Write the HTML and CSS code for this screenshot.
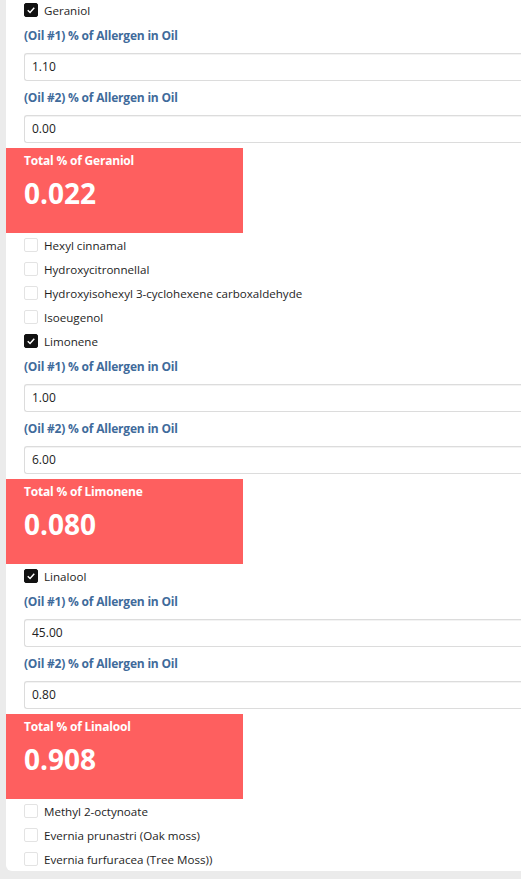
FILE: index.html
```html
<!DOCTYPE html>
<html>
<head>
<meta charset="utf-8">
<link rel="stylesheet" href="styles.css">
</head>
<body>
<div class="page">
  <div class="card">
    <label class="check-row"><span class="box checked"><svg viewBox="0 0 14 14"><path d="M3.2 7.2 L5.9 9.8 L10.8 4.4" /></svg></span><span>Geraniol</span></label>
    <div class="field-label">(Oil #1) % of Allergen in Oil</div>
    <div class="input">1.10</div>
    <div class="field-label">(Oil #2) % of Allergen in Oil</div>
    <div class="input">0.00</div>
    <div class="total">
      <div class="total-title">Total % of Geraniol</div>
      <div class="total-value">0.022</div>
    </div>
    <label class="check-row"><span class="box"></span><span>Hexyl cinnamal</span></label>
    <label class="check-row"><span class="box"></span><span>Hydroxycitronnellal</span></label>
    <label class="check-row"><span class="box"></span><span>Hydroxyisohexyl 3-cyclohexene carboxaldehyde</span></label>
    <label class="check-row"><span class="box"></span><span>Isoeugenol</span></label>
    <label class="check-row"><span class="box checked"><svg viewBox="0 0 14 14"><path d="M3.2 7.2 L5.9 9.8 L10.8 4.4" /></svg></span><span>Limonene</span></label>
    <div class="field-label">(Oil #1) % of Allergen in Oil</div>
    <div class="input">1.00</div>
    <div class="field-label">(Oil #2) % of Allergen in Oil</div>
    <div class="input">6.00</div>
    <div class="total">
      <div class="total-title">Total % of Limonene</div>
      <div class="total-value">0.080</div>
    </div>
    <label class="check-row"><span class="box checked"><svg viewBox="0 0 14 14"><path d="M3.2 7.2 L5.9 9.8 L10.8 4.4" /></svg></span><span>Linalool</span></label>
    <div class="field-label">(Oil #1) % of Allergen in Oil</div>
    <div class="input">45.00</div>
    <div class="field-label">(Oil #2) % of Allergen in Oil</div>
    <div class="input">0.80</div>
    <div class="total">
      <div class="total-title">Total % of Linalool</div>
      <div class="total-value">0.908</div>
    </div>
    <label class="check-row"><span class="box"></span><span>Methyl 2-octynoate</span></label>
    <label class="check-row"><span class="box"></span><span>Evernia prunastri (Oak moss)</span></label>
    <label class="check-row"><span class="box"></span><span>Evernia furfuracea (Tree Moss))</span></label>
  </div>
</div>
</body>
</html>
```

FILE: styles.css
```css
html, body {
  margin: 0;
  padding: 0;
  background: #ebebeb;
  font-family: "Open Sans", "Noto Sans", sans-serif;
  color: #222;
  overflow: hidden;
}
.page {
  padding-left: 6px;
  height: 879px;
}
.card {
  background: #fff;
  margin-top: -2px;
  margin-right: -20px;
  border-bottom-left-radius: 6px;
  padding-bottom: 0;
}
.check-row {
  display: flex;
  align-items: center;
  gap: 6px;
  height: 24px;
  padding-left: 18px;
  font-size: 11.6px;
  color: #1e1e1e;
}
.box {
  width: 14px;
  height: 14px;
  box-sizing: border-box;
  border: 1px solid #e3e3e3;
  border-radius: 2px;
  background: #fff;
  display: flex;
}
.box.checked {
  background: #111;
  border-color: #111;
}
.box svg {
  width: 12px;
  height: 12px;
  fill: none;
  stroke: #fff;
  stroke-width: 1.7;
}
.field-label {
  padding-left: 18px;
  margin-top: 4px;
  line-height: 20px;
  font-size: 12px;
  font-weight: 700;
  color: #3f6b9b;
  letter-spacing: -0.2px;
}
.input + .field-label {
  margin-top: 7px;
}
.input {
  margin-left: 18px;
  margin-top: 7px;
  height: 28px;
  box-sizing: border-box;
  border: 1px solid #dcdcdc;
  border-right: none;
  border-radius: 3px 0 0 3px;
  padding-left: 7px;
  line-height: 26px;
  font-size: 12px;
  color: #222;
  box-shadow: inset 0 1px 0 #f3f3f3;
}
.total {
  margin-top: 5px;
  width: 237px;
  height: 85px;
  box-sizing: border-box;
  background: #fe5f5f;
  color: #fff;
  padding: 5px 18px 0;
}
.total-title {
  font-size: 12px;
  font-weight: 700;
  line-height: 16px;
  letter-spacing: -0.2px;
}
.total-value {
  font-size: 28px;
  font-weight: 700;
  line-height: 36px;
  margin-top: 6px;
}
```
